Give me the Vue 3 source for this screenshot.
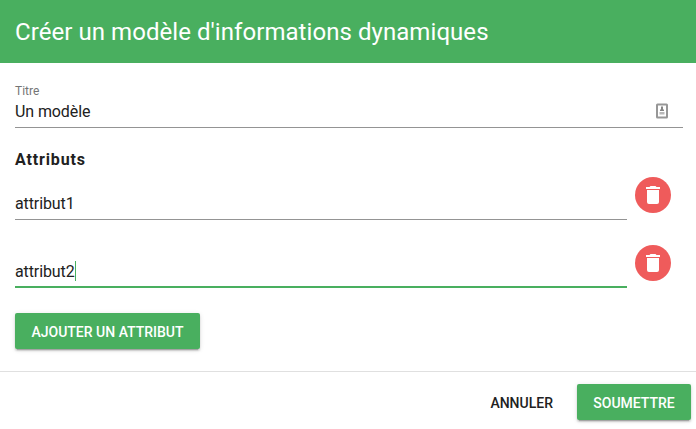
<script setup>
import { ref } from 'vue'

const title = ref('Un modèle')
const attributes = ref(['attribut1', 'attribut2'])
const focused = ref(1)

const remove = (index) => attributes.value.splice(index, 1)
const add = () => attributes.value.push('')
</script>

<template>
  <div class="dialog">
    <header class="toolbar">
      <h1>Créer un modèle d'informations dynamiques</h1>
    </header>

    <main class="content">
      <div class="title-field">
        <span class="label">Titre</span>
        <div class="value-row">
          <span class="value">{{ title }}</span>
          <svg class="contact" width="12" height="16" viewBox="0 0 12 16">
            <rect x="1" y="1.5" width="10" height="13" rx="0.5" fill="#fff" stroke="#979797" stroke-width="2" />
            <path d="M5 3.5h2v2.5l1 1v1H4V7l1-1z" fill="#858585" />
            <path d="M3.5 9h5v2.5h-5z" fill="#b9b9b9" />
          </svg>
        </div>
      </div>

      <h2>Attributs</h2>

      <div v-for="(attribute, index) in attributes" :key="index" class="attribute">
        <div class="field" :class="{ focused: index === focused }">
          <span class="value">{{ attribute }}</span>
          <span v-if="index === focused" class="caret"></span>
        </div>
        <button class="delete" @click="remove(index)">
          <svg width="24" height="24" viewBox="0 0 24 24">
            <path fill="#fff" d="M19 4h-3.5l-1-1h-5l-1 1H5v2h14M6 19a2 2 0 0 0 2 2h8a2 2 0 0 0 2-2V7H6z" />
          </svg>
        </button>
      </div>

      <button class="btn primary add" @click="add">Ajouter un attribut</button>
    </main>

    <footer class="actions">
      <button class="btn flat">Annuler</button>
      <button class="btn primary">Soumettre</button>
    </footer>
  </div>
</template>

<style>
body {
  margin: 0;
  background: #fff;
}
</style>

<style scoped>
.dialog {
  box-sizing: border-box;
  width: 100%;
  height: 429px;
  display: flex;
  flex-direction: column;
  overflow: hidden;
  background: #fff;
  color: #212121;
  font-family: Roboto, sans-serif;
  font-size: 16px;
}

.toolbar {
  height: 63px;
  flex: none;
  display: flex;
  align-items: center;
  padding: 0 15px;
  background: #49af5f;
  color: #fff;
}

h1 {
  margin: 0;
  font-size: 24px;
  font-weight: 400;
  line-height: 32px;
  letter-spacing: 0.06px;
  white-space: nowrap;
}

.content {
  height: 308px;
  flex: none;
  box-sizing: border-box;
  padding: 18px 13px 0 15px;
}

.title-field {
  height: 47px;
  box-sizing: border-box;
  border-bottom: 1px solid #949494;
}

.label {
  display: block;
  height: 20px;
  line-height: 20px;
  font-size: 12px;
  color: #757575;
}

.value-row {
  display: flex;
  align-items: center;
  justify-content: space-between;
  height: 20px;
  padding-right: 15px;
}

.value {
  line-height: 22px;
  letter-spacing: -0.1px;
}

.contact {
  display: block;
}

h2 {
  margin: 22px 0 7px;
  font-size: 16px;
  font-weight: 700;
  line-height: 20px;
  letter-spacing: 0.85px;
}

.value-row .value {
  padding-top: 1px;
}

.attribute {
  display: flex;
  align-items: flex-start;
  gap: 8px;
  height: 68px;
}

.field {
  width: 612px;
  height: 43px;
  box-sizing: border-box;
  display: flex;
  align-items: flex-start;
  padding-top: 16px;
  border-bottom: 1px solid #949494;
}

.field.focused {
  border-bottom: 2px solid #49af5f;
}

.caret {
  width: 1px;
  height: 20px;
  background: #49af5f;
}

.delete {
  width: 36px;
  height: 36px;
  padding: 6px;
  border: 0;
  border-radius: 50%;
  background: #ef5b5b;
}

.delete svg {
  display: block;
}

.btn {
  height: 36px;
  padding: 2px 16px 0;
  border: 0;
  border-radius: 2px;
  background: none;
  color: #212121;
  font: 500 14px/34px Roboto, sans-serif;
  text-transform: uppercase;
  white-space: nowrap;
}

.primary {
  background: #49af5f;
  color: #fff;
  box-shadow: 0 3px 1px -2px rgba(0, 0, 0, 0.2), 0 2px 2px 0 rgba(0, 0, 0, 0.14),
    0 1px 5px 0 rgba(0, 0, 0, 0.12);
}

.add {
  display: block;
  width: 185px;
}

.actions {
  flex: 1;
  display: flex;
  justify-content: flex-end;
  align-items: flex-start;
  gap: 8px;
  padding: 12px 5px 0 0;
  border-top: 1px solid #e0e0e0;
}

.actions .primary {
  width: 114px;
}
</style>
